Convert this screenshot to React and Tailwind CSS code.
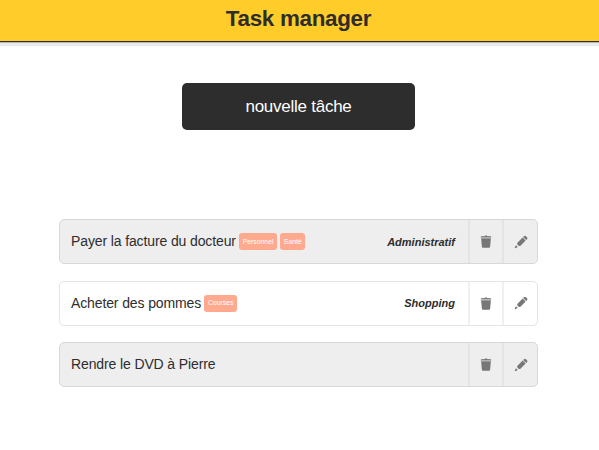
const tasks = [
  { title: 'Payer la facture du docteur', tags: ['Personnel', 'Santé'], category: 'Administratif', shaded: true },
  { title: 'Acheter des pommes', tags: ['Courses'], category: 'Shopping', shaded: false },
  { title: 'Rendre le DVD à Pierre', tags: [], category: '', shaded: true },
];

function TrashIcon() {
  return (
    <svg className="h-[13px] w-[12px]" viewBox="0 0 12 13" fill="currentColor" aria-hidden="true">
      <path d="M.6 2.4q0-1 1-1.1L5 1V.4h2V1l3.4.3q1 .1 1 1.1v.2H.6z" />
      <path d="M1.1 3.2h9.8l-.8 8.6q-.1 1-1 1H2.9q-.9 0-1-1z" />
    </svg>
  );
}

function PencilIcon() {
  return (
    <svg className="h-[14px] w-[14px]" viewBox="0 0 14 14" fill="currentColor" aria-hidden="true">
      <path d="M10 1.2q1-1 2 0l1 1q1 1 0 2l-.9.9L9.1 2.1zM8.6 2.6l3 3-5.1 5.1q-.6.6-1.3.3-1.5-.3-2-2-.2-.6.3-1.2zM2 10.3l1.8 1.8-2.1 1q-1 .2-.9-.8z" />
    </svg>
  );
}

function Task({ task }) {
  const look = task.shaded ? 'bg-[#eeeeee] border-[#d8d8d8]' : 'bg-white border-[#e4e4e4]';
  const divider = task.shaded ? 'border-[#e4e4e4]' : 'border-[#f0f0f0]';
  return (
    <li className={`flex h-[45px] items-stretch rounded-[5px] border ${look}`}>
      <div className="flex min-w-0 flex-1 items-center pl-[11px] pr-[13px]">
        <span className="mr-[3.2px] whitespace-nowrap pb-px text-[14px] leading-5 tracking-[-0.12px]">{task.title}</span>
        {task.tags.map((tag) => (
          <span key={tag} className="mr-[3px] flex h-[17px] items-center rounded-[3px] bg-[#ffa98f] px-[3.7px] pt-px text-[6.84px] leading-none text-white">
            {tag}
          </span>
        ))}
        <span className="ml-auto pt-px text-[11px] font-bold italic">{task.category}</span>
      </div>
      <button className={`flex w-[34px] items-center justify-center border-l-2 text-[#777777] ${divider}`}>
        <TrashIcon />
      </button>
      <button className={`flex w-[35px] items-center justify-center border-l-2 text-[#777777] ${divider}`}>
        <PencilIcon />
      </button>
    </li>
  );
}

export default function App() {
  return (
    <div className="h-[450px] overflow-hidden bg-white font-['Liberation_Sans',Arial,sans-serif] text-[#2d2d2d]">
      <header className="flex h-[42px] justify-center border-b border-[#2d2d2d] bg-[#ffcc29] pr-[2px] pt-[5px] shadow-[0_1px_0_#b8b6b8,0_4px_0_#e9e9e9]">
        <h1 className="text-[22.4px] font-bold leading-[27px] tracking-[-0.3px]">Task manager</h1>
      </header>
      <main className="flex flex-col">
        <button className="ml-[182px] mt-[41.4px] flex h-[46.6px] w-[233px] items-center justify-center rounded-[5px] bg-[#2d2d2d] pt-px text-[17px] tracking-[-0.25px] text-white">
          nouvelle tâche
        </button>
        <ul className="ml-[59px] mt-[89.3px] flex w-[479px] flex-col gap-[16.4px]">
          {tasks.map((task) => (
            <Task key={task.title} task={task} />
          ))}
        </ul>
      </main>
    </div>
  );
}
